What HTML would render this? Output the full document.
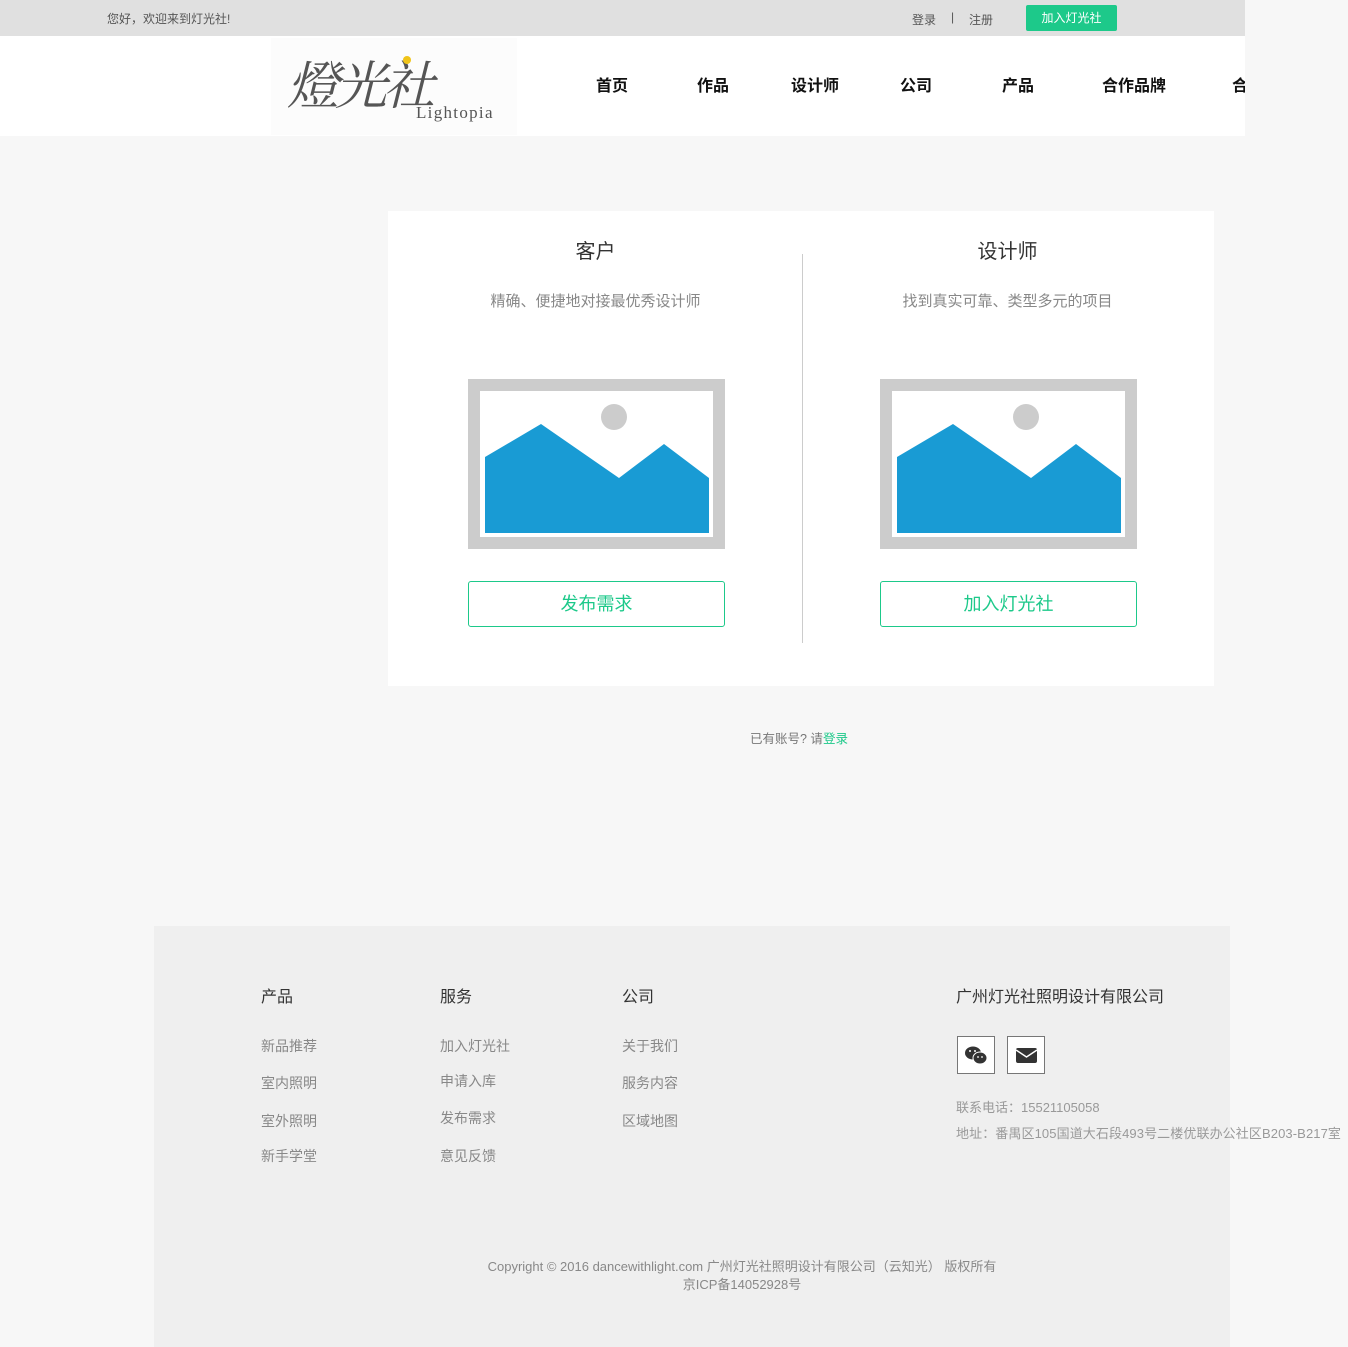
<!DOCTYPE html>
<html><head><meta charset="utf-8"><style>
body{margin:0;background:#f7f7f7;font-family:"Liberation Sans","Noto Sans CJK SC",sans-serif;width:1348px;height:1347px;position:relative;overflow:hidden}
.a{position:absolute}
.top{left:0;top:0;width:1245px;height:36px;background:#e0e0e0;font-size:12px;color:#555}
.hdr{left:0;top:36px;width:1245px;height:100px;background:#fff;overflow:hidden}
.nav{font-size:16px;font-weight:bold;color:#111;top:72px}
.card{left:388px;top:211px;width:826px;height:475px;background:#fff}
.pic{width:257px;height:170px}
.btn{width:255px;height:44px;border:1px solid #1dc98a;border-radius:3px;color:#1dc98a;font-size:18px;text-align:center;line-height:44px}
.foot{left:154px;top:926px;width:1076px;height:421px;background:#efefef}
.fh{font-size:16px;color:#333;top:983px}
.fl{font-size:14px;color:#888}
.ic{width:36px;height:36px;border:1px solid #777;top:1036px;background:#fff}
</style></head><body>
<div class="a top"><span class="a" style="left:107px;top:10px">您好，欢迎来到灯光社!</span>
<span class="a" style="left:912px;top:11px">登录</span><span class="a" style="left:951px;top:10px">|</span><span class="a" style="left:969px;top:11px">注册</span>
<span class="a" style="left:1026px;top:5px;width:91px;height:26px;background:#1dc98a;color:#fff;border-radius:2px;text-align:center;line-height:26px;font-size:12px">加入灯光社</span></div>
<div class="a hdr"><div class="a" style="left:271px;top:2px;width:246px;height:97px;background:#fcfcfc"></div>
<span class="a" style="left:287px;top:8px;font-size:52px;color:#555;font-family:'Noto Serif CJK SC',serif;font-style:italic;letter-spacing:-4px">燈光社</span>
<span class="a" style="left:403px;top:20px;width:8px;height:8px;background:#f0c419;border-radius:50%"></span>
<span class="a" style="left:416px;top:67px;font-size:17px;color:#555;font-family:'Liberation Serif',serif;letter-spacing:1.3px">Lightopia</span></div>
<span class="a nav" style="left:596px">首页</span><span class="a nav" style="left:697px">作品</span><span class="a nav" style="left:791px">设计师</span><span class="a nav" style="left:900px">公司</span><span class="a nav" style="left:1002px">产品</span><span class="a nav" style="left:1102px">合作品牌</span>
<div class="a" style="left:1232px;top:72px;width:13px;overflow:hidden;font-size:16px;font-weight:bold;color:#111">合</div>
<div class="a card"></div>
<div class="a" style="left:802px;top:254px;width:1px;height:389px;background:#ccc"></div>
<div class="a" style="left:388px;top:235px;width:415px;text-align:center;font-size:20px;color:#333">客户</div>
<div class="a" style="left:801px;top:235px;width:413px;text-align:center;font-size:20px;color:#333">设计师</div>
<div class="a" style="left:388px;top:290px;width:415px;text-align:center;font-size:15px;color:#888">精确、便捷地对接最优秀设计师</div>
<div class="a" style="left:801px;top:290px;width:413px;text-align:center;font-size:15px;color:#888">找到真实可靠、类型多元的项目</div>
<svg class="a pic" style="left:468px;top:379px" viewBox="0 0 257 170"><rect width="257" height="170" fill="#ccc"/><rect x="12" y="12" width="233" height="146" fill="#fff"/><polygon points="17,78 73,45 151,99 196,65 241,99 241,154 17,154" fill="#199bd4"/><circle cx="146" cy="38" r="13" fill="#ccc"/></svg>
<svg class="a pic" style="left:880px;top:379px" viewBox="0 0 257 170"><rect width="257" height="170" fill="#ccc"/><rect x="12" y="12" width="233" height="146" fill="#fff"/><polygon points="17,78 73,45 151,99 196,65 241,99 241,154 17,154" fill="#199bd4"/><circle cx="146" cy="38" r="13" fill="#ccc"/></svg>
<div class="a btn" style="left:468px;top:581px">发布需求</div>
<div class="a btn" style="left:880px;top:581px">加入灯光社</div>
<div class="a" style="left:750px;top:728px;font-size:12.5px;color:#777">已有账号? 请<span style="color:#1dc98a">登录</span></div>
<div class="a foot"></div>
<span class="a fh" style="left:261px">产品</span><span class="a fh" style="left:440px">服务</span><span class="a fh" style="left:622px">公司</span><span class="a fh" style="left:956px">广州灯光社照明设计有限公司</span>
<span class="a fl" style="left:261px;top:1036px">新品推荐</span><span class="a fl" style="left:261px;top:1073px">室内照明</span><span class="a fl" style="left:261px;top:1111px">室外照明</span><span class="a fl" style="left:261px;top:1146px">新手学堂</span>
<span class="a fl" style="left:440px;top:1036px">加入灯光社</span><span class="a fl" style="left:440px;top:1071px">申请入库</span><span class="a fl" style="left:440px;top:1108px">发布需求</span><span class="a fl" style="left:440px;top:1146px">意见反馈</span>
<span class="a fl" style="left:622px;top:1036px">关于我们</span><span class="a fl" style="left:622px;top:1073px">服务内容</span><span class="a fl" style="left:622px;top:1111px">区域地图</span>
<div class="a ic" style="left:957px"><svg width="36" height="36"><ellipse cx="15" cy="16" rx="8" ry="6.5" fill="#333"/><ellipse cx="22" cy="21" rx="7" ry="6" fill="#333" stroke="#fff" stroke-width="1"/><circle cx="12" cy="14" r="1" fill="#fff"/><circle cx="17" cy="14" r="1" fill="#fff"/><circle cx="20" cy="20" r=".9" fill="#fff"/><circle cx="24" cy="20" r=".9" fill="#fff"/></svg></div>
<div class="a ic" style="left:1007px"><svg width="36" height="36"><rect x="8" y="11" width="21" height="15" rx="2" fill="#333"/><path d="M8 13 L18.5 20 L29 13" stroke="#fff" stroke-width="1.5" fill="none"/></svg></div>
<span class="a" style="left:956px;top:1097px;font-size:13px;color:#999">联系电话：15521105058</span>
<span class="a" style="left:956px;top:1123px;font-size:13px;color:#999;white-space:nowrap;letter-spacing:0.1px">地址：番禺区105国道大石段493号二楼优联办公社区B203-B217室</span>
<div class="a" style="left:154px;top:1258px;width:1176px;text-align:center;font-size:13px;color:#888;line-height:18px">Copyright © 2016 dancewithlight.com 广州灯光社照明设计有限公司（云知光） 版权所有<br>京ICP备14052928号</div>
</body></html>
